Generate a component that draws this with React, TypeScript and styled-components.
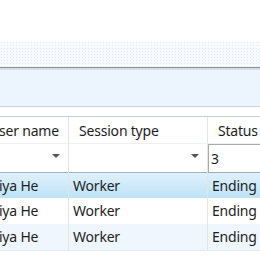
import React from "react";
import styled, { createGlobalStyle } from "styled-components";

const Global = createGlobalStyle`
  html, body {
    margin: 0;
    padding: 0;
    background: #ffffff;
    width: 260px;
    height: 260px;
    overflow: hidden;
  }
  body {
    font-family: "Segoe UI", "Noto Sans", "Open Sans", sans-serif;
    color: #1e1e1e;
  }
`;

const Page = styled.div`
  width: 260px;
  height: 260px;
  overflow: hidden;
  display: flex;
  flex-direction: column;
`;

const TopSpace = styled.div`
  height: 41px;
  background: #ffffff;
`;

const DotBand = styled.div`
  height: 26px;
  background-color: #f7fbfe;
  background-image: radial-gradient(#dfecf8 0.9px, transparent 1px);
  background-size: 3px 3px;
  border-bottom: 1px solid #8d9093;
`;

const Shade = styled.div`
  height: 2px;
  background: #d9dde1;
`;

const InfoPanel = styled.div`
  height: 36px;
  background: #ecf5fd;
  border-bottom: 1px solid #cdd1d5;
`;

const Gap = styled.div`
  height: 9px;
  background: #ffffff;
`;

const Viewport = styled.div`
  flex: 1;
  overflow: hidden;
  border-top: 1px solid #c9ced3;
`;

/* grid is scrolled horizontally, so the first column is partly hidden */
const Grid = styled.div`
  margin-left: -21px;
  width: 303px;
  font-size: 14px;
  letter-spacing: -0.2px;
`;

const Row = styled.div<{ $bg?: string; $top?: string; $h?: number }>`
  display: grid;
  grid-template-columns: 90px 139px 74px;
  height: ${(p) => p.$h ?? 26}px;
  box-sizing: border-box;
  background: ${(p) => p.$bg || "#ffffff"};
  border-top: ${(p) => p.$top || "none"};
  line-height: 25px;
`;

const HeadCell = styled.div`
  padding-left: 10px;
  white-space: nowrap;
  overflow: hidden;
  border-right: 1px solid #e2e5e8;
  border-bottom: 1px solid #eef0f2;
  line-height: 28px;
`;

const FilterCell = styled.div`
  position: relative;
  border-right: 1px solid #e2e5e8;
`;

const Arrow = styled.span`
  position: absolute;
  right: 8px;
  top: 10px;
  width: 0;
  height: 0;
  border-left: 4px solid transparent;
  border-right: 4px solid transparent;
  border-top: 4px solid #545454;
`;

const FilterInput = styled.div`
  height: 29px;
  border: 1px solid #a8abb0;
  border-right: none;
  box-sizing: border-box;
  padding-left: 2px;
  line-height: 28px;
  background: #ffffff;
`;

const Cell = styled.div`
  padding-left: 4px;
  white-space: nowrap;
  overflow: hidden;
  border-right: 1px solid #e2e5e8;
`;

const Tail = styled.div`
  border-top: 1px solid #e6ebf0;
`;

const rows = [
  { bg: "linear-gradient(#dff0fc, #bde3f7)", top: "1px solid #9fb4c4" },
  { bg: "#ffffff" },
  { bg: "#f0f6fd" },
];

export default function App() {
  return (
    <Page>
      <Global />
      <TopSpace />
      <DotBand />
      <Shade />
      <InfoPanel />
      <Gap />
      <Viewport>
        <Grid>
          <Row $h={27}>
            <HeadCell>User name</HeadCell>
            <HeadCell>Session type</HeadCell>
            <HeadCell>Status</HeadCell>
          </Row>
          <Row $h={28}>
            <FilterCell>
              <Arrow />
            </FilterCell>
            <FilterCell>
              <Arrow />
            </FilterCell>
            <FilterInput>3</FilterInput>
          </Row>
          {rows.map((r, i) => (
            <Row key={i} $bg={r.bg} $top={r.top}>
              <Cell>Shiya He</Cell>
              <Cell>Worker</Cell>
              <Cell>Ending</Cell>
            </Row>
          ))}
          <Tail />
        </Grid>
      </Viewport>
    </Page>
  );
}
